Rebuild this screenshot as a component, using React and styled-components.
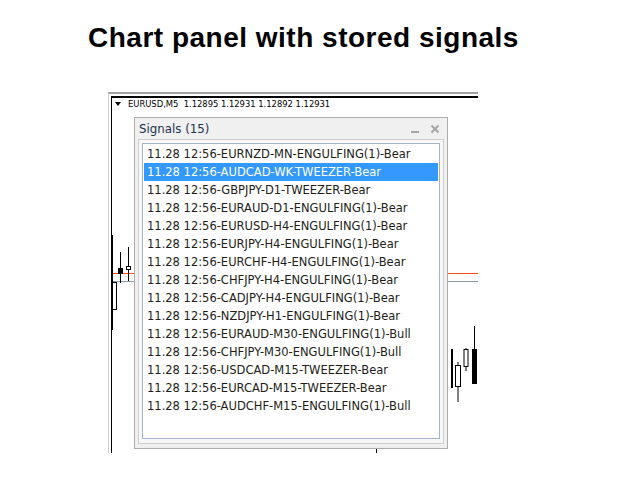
import React from 'react'
import styled, { createGlobalStyle } from 'styled-components'

const Global = createGlobalStyle`
  html, body { margin: 0; padding: 0; background: #fff; }
  body { font-family: "DejaVu Sans", sans-serif; }
`

const Page = styled.div`
  width: 640px;
  height: 480px;
  background: #fff;
  overflow: hidden;
`

const Title = styled.h1`
  margin: 0;
  padding: 24px 0 0 88px;
  font-family: "Liberation Sans", Arial, sans-serif;
  font-weight: bold;
  font-size: 28px;
  line-height: 28px;
  letter-spacing: 0.5px;
  color: #000;
`

// grey outer frame of the terminal window
const Frame = styled.div`
  margin: 40px 0 0 108px;
  width: 370px;
  box-sizing: border-box;
  border-top: 2px solid #a0a0a0;
  border-left: 1px solid #cccccc;
  padding: 2px 0 0 2px;
`

const Chart = styled.div`
  position: relative;
  height: 355px;
  border-top: 2px solid #000;
  border-left: 1px solid #000;
`

const Drawing = styled.svg`
  position: absolute;
  left: 0;
  top: 0;
  z-index: 0;
`

const Header = styled.div`
  position: relative;
  z-index: 1;
  height: 19px;
  display: flex;
  align-items: flex-start;
  padding-left: 3px;
  font-size: 8.4px;
  line-height: 12px;
  color: #000;
  white-space: pre;
`

const Arrow = styled.span`
  width: 0;
  height: 0;
  margin: 4px 7px 0 0;
  border-left: 3.5px solid transparent;
  border-right: 3.5px solid transparent;
  border-top: 4px solid #000;
`

const Panel = styled.div`
  position: relative;
  z-index: 1;
  margin-left: 22px;
  width: 314px;
  box-sizing: border-box;
  border: 1px solid #adadad;
  background: #f0f0f0;
  padding: 0 3px 4px 3px;
`

const TitleBar = styled.div`
  height: 21px;
  display: flex;
  align-items: center;
  padding-left: 1px;
  font-size: 11.8px;
  color: #23304f;
`

const TitleText = styled.span`
  flex: 1;
`

const Ctrl = styled.span`
  display: flex;
  width: 10px;
  height: 10px;
  margin-right: ${p => p.mr}px;
`

const Body = styled.div`
  border: 1px solid #cfcfcf;
  background: #f7f7f7;
  padding: 3px 3px 4px 3px;
`

const List = styled.div`
  height: 296px;
  box-sizing: border-box;
  border: 1px solid #a3b5cb;
  background: #fff;
  padding: 1px 1px;
`

const Row = styled.div`
  height: 18px;
  line-height: 19px;
  padding-left: 3px;
  font-size: 11.5px;
  white-space: nowrap;
  color: ${p => (p.sel ? '#fff' : '#221c18')};
  background: ${p => (p.sel ? '#3399ff' : 'transparent')};
`

const signals = [
  'EURNZD-MN-ENGULFING(1)-Bear',
  'AUDCAD-WK-TWEEZER-Bear',
  'GBPJPY-D1-TWEEZER-Bear',
  'EURAUD-D1-ENGULFING(1)-Bear',
  'EURUSD-H4-ENGULFING(1)-Bear',
  'EURJPY-H4-ENGULFING(1)-Bear',
  'EURCHF-H4-ENGULFING(1)-Bear',
  'CHFJPY-H4-ENGULFING(1)-Bear',
  'CADJPY-H4-ENGULFING(1)-Bear',
  'NZDJPY-H1-ENGULFING(1)-Bear',
  'EURAUD-M30-ENGULFING(1)-Bull',
  'CHFJPY-M30-ENGULFING(1)-Bull',
  'USDCAD-M15-TWEEZER-Bear',
  'EURCAD-M15-TWEEZER-Bear',
  'AUDCHF-M15-ENGULFING(1)-Bull',
]

const Candles = () => (
  <Drawing width="366" height="355" viewBox="0 0 366 355">
    {/* price lines */}
    <rect x="0" y="175" width="366" height="1" fill="#ff4d0f" />
    <rect x="0" y="183" width="366" height="1" fill="#8c9aa8" />
    {/* left candles */}
    <rect x="0" y="137" width="1" height="95" fill="#000" />
    <rect x="0.5" y="184.5" width="4" height="27" fill="#fff" stroke="#000" />
    <line x1="8.5" y1="154" x2="8.5" y2="185" stroke="#000" />
    <rect x="6" y="170" width="5" height="6" fill="#000" />
    <line x1="16.5" y1="149" x2="16.5" y2="183" stroke="#000" />
    <rect x="14.5" y="168.5" width="4" height="3" fill="#fff" stroke="#000" />
    {/* right candles */}
    <rect x="339" y="251" width="2" height="39" fill="#000" />
    <line x1="346" y1="264" x2="346" y2="304" stroke="#000" />
    <rect x="343.5" y="267.5" width="5" height="21" fill="#fff" stroke="#000" />
    <line x1="354" y1="250" x2="354" y2="273" stroke="#000" />
    <rect x="352" y="251.5" width="4" height="17" fill="#fff" stroke="#000" />
    <line x1="362.5" y1="228" x2="362.5" y2="286" stroke="#000" />
    <rect x="360" y="251" width="5" height="35" fill="#000" />
    {/* time tick */}
    <line x1="264.5" y1="349" x2="264.5" y2="355" stroke="#000" />
  </Drawing>
)

const App = () => {
  return (
    <>
      <Global />
      <Page>
        <Title>Chart panel with stored signals</Title>
        <Frame>
          <Chart>
            <Candles />
            <Header>
              <Arrow />
              {'EURUSD,M5  1.12895 1.12931 1.12892 1.12931'}
            </Header>
            <Panel>
              <TitleBar>
                <TitleText>Signals (15)</TitleText>
                <Ctrl mr={10}>
                  <svg width="10" height="10" viewBox="0 0 10 10">
                    <rect x="1" y="7" width="8" height="2" fill="#a6a6a6" />
                  </svg>
                </Ctrl>
                <Ctrl mr={4}>
                  <svg width="10" height="10" viewBox="0 0 10 10">
                    <path d="M1.5 1.5 L8.5 8.5 M8.5 1.5 L1.5 8.5" stroke="#a6a6a6" strokeWidth="2" />
                  </svg>
                </Ctrl>
              </TitleBar>
              <Body>
                <List>
                  {signals.map((s, i) => (
                    <Row key={i} sel={i === 1}>{'11.28 12:56-' + s}</Row>
                  ))}
                </List>
              </Body>
            </Panel>
          </Chart>
        </Frame>
      </Page>
    </>
  )
}

export default App
